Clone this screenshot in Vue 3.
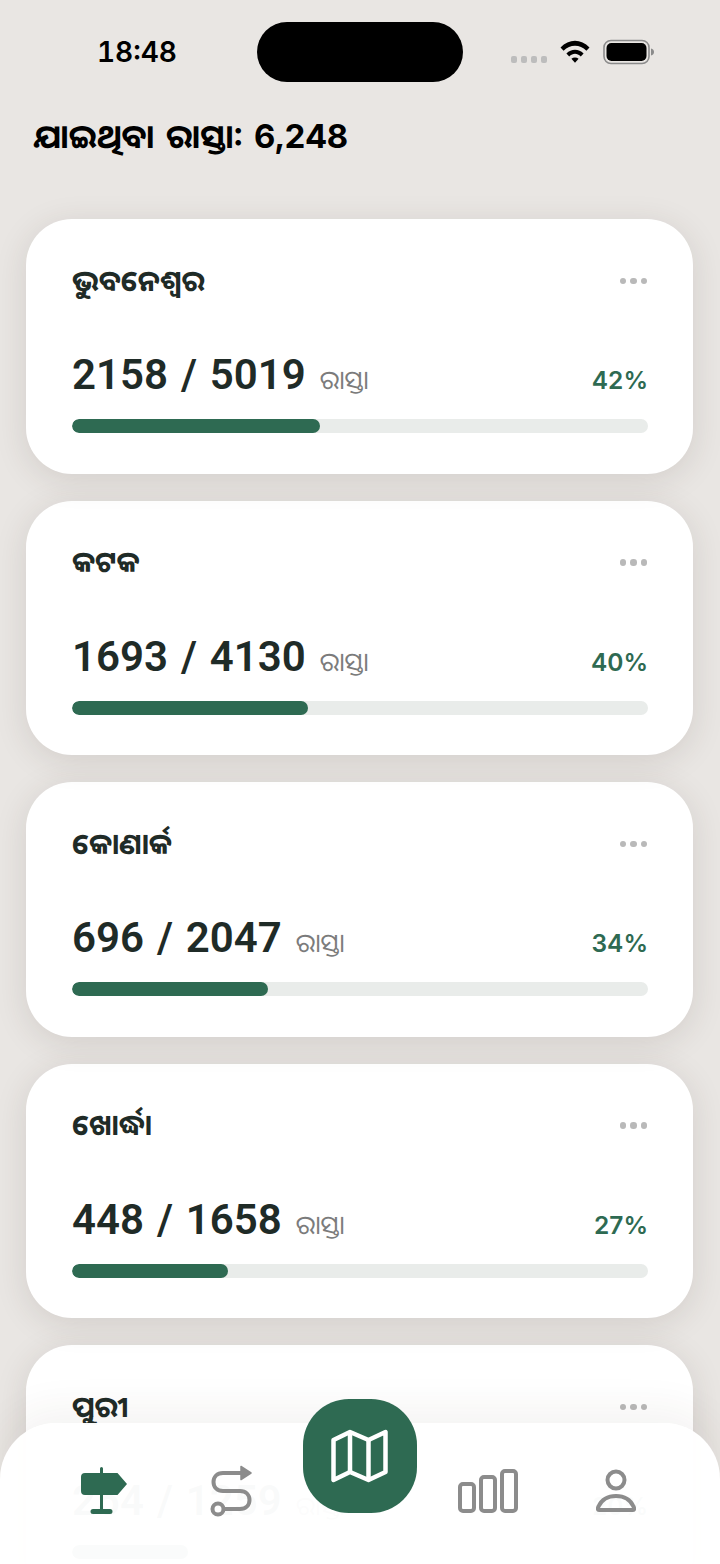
<script setup>
const total = "6,248";

const cities = [
  { name: "ଭୁବନେଶ୍ୱର", done: 2158, all: 5019 },
  { name: "କଟକ", done: 1693, all: 4130 },
  { name: "କୋଣାର୍କ", done: 696, all: 2047 },
  { name: "ଖୋର୍ଦ୍ଧା", done: 448, all: 1658 },
  { name: "ପୁରୀ", done: 254, all: 1259 },
];

function ratio(city) {
  return (city.done / city.all) * 100;
}
</script>

<template>
  <div class="screen" lang="or">
    <div class="status-bar">
      <span class="time">18:48</span>
      <div class="island"></div>
      <div class="status-icons">
        <div class="signal"><i></i><i></i><i></i><i></i></div>
        <svg class="wifi" width="32" height="24" viewBox="0 0 32 24">
          <path d="M1.500 8.500C10-0.500 22-0.500 30.500 8.500L27.400 11.800C20.800 5 11.200 5 4.600 11.800Z" fill="#000" />
          <path d="M7.400 14.400C12.400 9.400 19.600 9.400 24.600 14.400L21.800 17.400C18.200 14 13.800 14 10.200 17.400Z" fill="#000" />
          <path d="M12.400 19.800C14.600 18 17.400 18 19.600 19.800L16 23.800Z" fill="#000" />
        </svg>
        <svg class="battery" width="52" height="26" viewBox="0 0 52 26">
          <rect x="1" y="1.500" width="45" height="23" rx="7" fill="none" stroke="#8b8b8b" stroke-width="1.600" />
          <rect x="3.500" y="4" width="40" height="18" rx="5" fill="#000" />
          <path d="M48 9.500C50 10 51 11.200 51 13C51 14.800 50 16 48 16.500Z" fill="#8b8b8b" />
        </svg>
      </div>
    </div>

    <h1 class="headline">ଯାଇଥିବା ରାସ୍ତା: {{ total }}</h1>

    <div class="cards">
      <div v-for="city in cities" :key="city.name" class="card">
        <div class="card-top">
          <span class="city">{{ city.name }}</span>
          <div class="dots"><i></i><i></i><i></i></div>
        </div>
        <div class="numbers">
          <span class="count">{{ city.done }} / {{ city.all }}</span>
          <span class="unit">ରାସ୍ତା</span>
          <span class="percent">{{ Math.floor(ratio(city)) }}%</span>
        </div>
        <div class="track">
          <div class="fill" :style="{ width: ratio(city) + '%' }"></div>
        </div>
      </div>
    </div>

    <nav class="tabbar">
      <div class="tab">
        <svg width="48" height="50" viewBox="0 0 48 50">
          <path d="M20 2.500a1.500 1.500 0 0 1 3 0V7H37.500L47 18L37.500 29H23V43H30a2.500 2.500 0 0 1 0 5H13a2.500 2.500 0 0 1 0-5h7V29H5a4 4 0 0 1-4-4V11a4 4 0 0 1 4-4H20Z" fill="#2e6a52" />
        </svg>
      </div>
      <div class="tab">
        <svg width="44" height="52" viewBox="0 0 44 52" fill="none" stroke="#8c8c8c" stroke-width="4" stroke-linecap="round">
          <path d="M32 8H13C7 8 3.500 12 3.500 17C3.500 22 7 26 13 26H30C36 26 39.500 30 39.500 35C39.500 40 36 44 30 44H14" />
          <path d="M31 1.500L41 8L31 14.500Z" fill="#8c8c8c" stroke="#8c8c8c" stroke-width="1.500" stroke-linejoin="round" />
          <circle cx="8" cy="44" r="5.500" fill="#fff" />
        </svg>
      </div>
      <div class="tab center-slot">
        <button class="map-btn" type="button">
          <svg width="60" height="56" viewBox="0 0 60 56" fill="none" stroke="#fff" stroke-width="4.500" stroke-linejoin="round">
            <path d="M3.500 12L20 4L38.500 12L55.500 4V44L38.500 52L20 44L3.500 52Z" />
            <path d="M20 4V44M38.500 12V52" />
          </svg>
        </button>
      </div>
      <div class="tab">
        <svg width="60" height="44" viewBox="0 0 60 44" fill="none" stroke="#8c8c8c" stroke-width="4">
          <rect x="2" y="15" width="14" height="27" rx="3" />
          <rect x="23" y="8" width="14" height="34" rx="3" />
          <rect x="44" y="2" width="14" height="40" rx="3" />
        </svg>
      </div>
      <div class="tab">
        <svg width="40" height="44" viewBox="0 0 40 44" fill="none" stroke="#8c8c8c" stroke-width="4">
          <circle cx="20" cy="11" r="8.500" />
          <path d="M3 41C1.500 41 1.500 39.500 2.500 37.500C5.500 31 12 27 20 27C28 27 34.500 31 37.500 37.500C38.500 39.500 38.500 41 37 41Z" stroke-linejoin="round" />
        </svg>
      </div>
    </nav>
  </div>
</template>

<style>
html,
body {
  margin: 0;
  background: #e9e6e3;
}
</style>

<style scoped>
.screen {
  position: relative;
  width: 720px;
  height: 1564px;
  overflow: hidden;
  background: #e9e6e3;
  font-family: "Inter", "Noto Sans Oriya", "Noto Sans Odia", "Lohit Odia", "Noto Sans", sans-serif;
}

.status-bar {
  display: flex;
  align-items: center;
  height: 60px;
  padding: 22px 0 0 97px;
}
.time {
  width: 160px;
  font-size: 28px;
  font-weight: 600;
  color: #000;
  font-feature-settings: "tnum";
}
.island {
  width: 206px;
  height: 60px;
  border-radius: 30px;
  background: #000;
}
.status-icons {
  display: flex;
  align-items: center;
  margin-left: 48px;
}
.signal {
  display: flex;
  gap: 4px;
  margin-top: 14px;
  margin-right: 12px;
}
.signal i {
  width: 6px;
  height: 7px;
  border-radius: 2px;
  background: #bdbdbd;
}
.wifi {
  margin-right: 12px;
  margin-top: -2px;
}

.headline {
  margin: 30px 0 0 33px;
  font-size: 33px;
  line-height: 48px;
  font-weight: 700;
  color: #000;
  font-feature-settings: "tnum";
  word-spacing: 2.500px;
}

.cards {
  display: flex;
  flex-direction: column;
  gap: 27px;
  margin: 59px 27px 0 26px;
}
.card {
  position: relative;
  height: 254.500px;
  flex-shrink: 0;
  box-sizing: border-box;
  padding: 36px 45px 0 46px;
  border-radius: 46px;
  background: #fff;
  box-shadow: 0 6px 32px rgba(60, 50, 40, 0.13);
}
.card:nth-child(1) {
  z-index: 5;
}
.card:nth-child(2) {
  z-index: 4;
}
.card:nth-child(3) {
  z-index: 3;
}
.card:nth-child(4) {
  z-index: 2;
}
.card-top {
  display: flex;
  justify-content: space-between;
  align-items: center;
  height: 48px;
}
.city {
  font-size: 29px;
  font-weight: 700;
  color: #1f2b27;
}
.dots {
  display: flex;
  gap: 4px;
  margin-top: 4px;
  margin-right: 1px;
}
.dots i {
  width: 6.500px;
  height: 6.500px;
  border-radius: 50%;
  background: #b9b9b9;
}
.numbers {
  display: flex;
  align-items: baseline;
  margin-top: 47px;
  height: 54px;
}
.count {
  font-family: "Roboto", sans-serif;
  font-size: 42px;
  font-weight: 600;
  color: #1f2b27;
  word-spacing: 2.500px;
}
.unit {
  margin-left: 14px;
  font-size: 26px;
  color: #7b7b7b;
}
.percent {
  margin-left: auto;
  font-size: 24.500px;
  font-weight: 600;
  color: #2e6a52;
}
.track {
  height: 14px;
  margin-top: 15px;
  border-radius: 7px;
  background: #e9ecea;
  overflow: hidden;
}
.fill {
  height: 100%;
  border-radius: 7px;
  background: #2e6a52;
}

.tabbar {
  position: absolute;
  left: 0;
  right: 0;
  bottom: 0;
  z-index: 10;
  height: 141px;
  display: grid;
  grid-template-columns: repeat(5, 128px);
  justify-content: center;
  align-items: start;
  border-radius: 56px 56px 0 0;
  background: rgba(255, 255, 255, 0.975);
  box-shadow: 0 -14px 40px rgba(60, 50, 40, 0.06);
}
.tab {
  display: flex;
  justify-content: center;
  align-items: center;
  height: 136px;
}
.center-slot {
  position: relative;
}
.map-btn {
  position: absolute;
  left: 7px;
  top: -24px;
  width: 114px;
  height: 114px;
  border: none;
  padding: 0;
  display: flex;
  align-items: center;
  justify-content: center;
  border-radius: 46px;
  background: #2e6a52;
}
</style>
